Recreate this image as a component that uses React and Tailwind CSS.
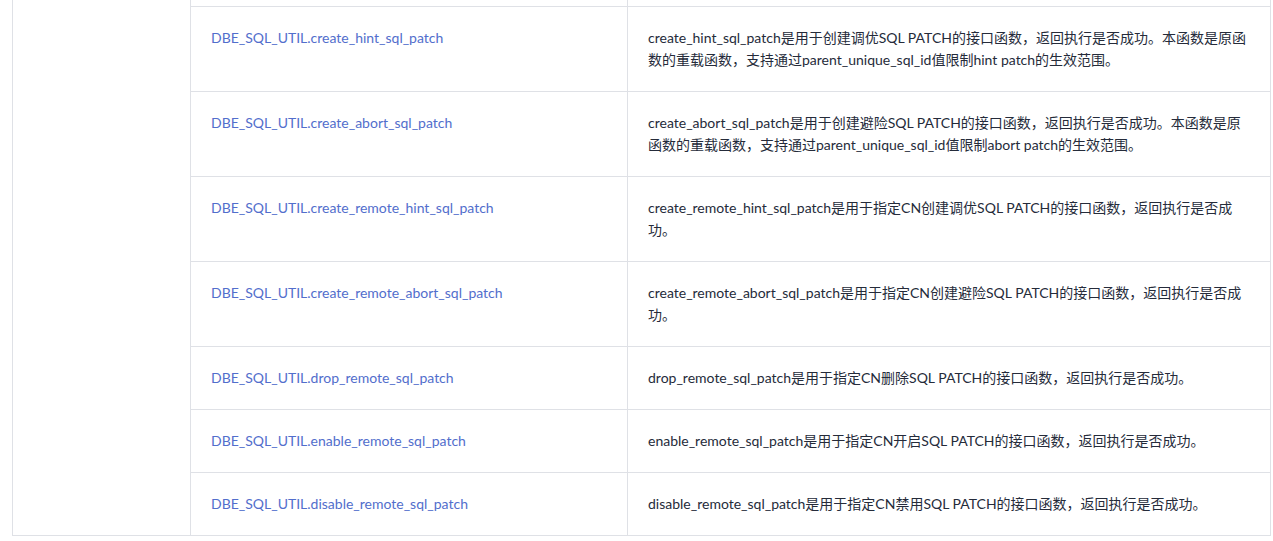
import React from 'react';

const rows = [
  {
    name: 'DBE_SQL_UTIL.create_hint_sql_patch',
    desc: 'create_hint_sql_patch是用于创建调优SQL PATCH的接口函数，返回执行是否成功。本函数是原函数的重载函数，支持通过parent_unique_sql_id值限制hint patch的生效范围。',
  },
  {
    name: 'DBE_SQL_UTIL.create_abort_sql_patch',
    desc: 'create_abort_sql_patch是用于创建避险SQL PATCH的接口函数，返回执行是否成功。本函数是原函数的重载函数，支持通过parent_unique_sql_id值限制abort patch的生效范围。',
  },
  {
    name: 'DBE_SQL_UTIL.create_remote_hint_sql_patch',
    desc: 'create_remote_hint_sql_patch是用于指定CN创建调优SQL PATCH的接口函数，返回执行是否成功。',
  },
  {
    name: 'DBE_SQL_UTIL.create_remote_abort_sql_patch',
    desc: 'create_remote_abort_sql_patch是用于指定CN创建避险SQL PATCH的接口函数，返回执行是否成功。',
  },
  {
    name: 'DBE_SQL_UTIL.drop_remote_sql_patch',
    desc: 'drop_remote_sql_patch是用于指定CN删除SQL PATCH的接口函数，返回执行是否成功。',
  },
  {
    name: 'DBE_SQL_UTIL.enable_remote_sql_patch',
    desc: 'enable_remote_sql_patch是用于指定CN开启SQL PATCH的接口函数，返回执行是否成功。',
  },
  {
    name: 'DBE_SQL_UTIL.disable_remote_sql_patch',
    desc: 'disable_remote_sql_patch是用于指定CN禁用SQL PATCH的接口函数，返回执行是否成功。',
  },
];

export default function App() {
  return (
    <div
      className="bg-white min-h-[541px] text-[14px] leading-[22px] text-[#252b3a]"
      style={{ fontFamily: 'Lato, "Noto Sans CJK SC", sans-serif' }}
    >
      <div className="ml-[12px] w-[1259px] flex border-l border-r border-b border-[#dfe1e6]">
        <div className="w-[177px] shrink-0" />
        <div className="flex-1 flex flex-col border-l border-[#dfe1e6]">
          <div className="h-[7px] flex border-b border-[#dfe1e6]">
            <div className="w-[436px] shrink-0" />
            <div className="flex-1 border-l border-[#dfe1e6]" />
          </div>
          {rows.map((r, i) => (
            <div
              key={r.name}
              className={`flex ${i < rows.length - 1 ? 'border-b border-[#dfe1e6]' : ''}`}
            >
              <div className="w-[436px] shrink-0 px-5 py-5">
                <a className="text-[#526ecc] cursor-pointer">{r.name}</a>
              </div>
              <div className="flex-1 border-l border-[#dfe1e6] px-5 py-5">{r.desc}</div>
            </div>
          ))}
        </div>
      </div>
    </div>
  );
}
